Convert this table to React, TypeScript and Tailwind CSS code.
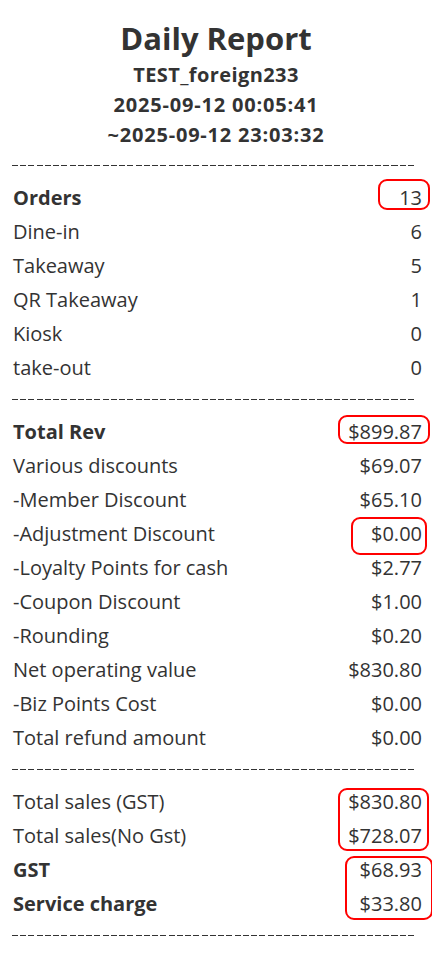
import React from "react";

type Row = { label: string; value: string; bold?: boolean };

const orders: Row[] = [
  { label: "Orders", value: "13", bold: true },
  { label: "Dine-in", value: "6" },
  { label: "Takeaway", value: "5" },
  { label: "QR Takeaway", value: "1" },
  { label: "Kiosk", value: "0" },
  { label: "take-out", value: "0" },
];

const revenue: Row[] = [
  { label: "Total Rev", value: "$899.87", bold: true },
  { label: "Various discounts", value: "$69.07" },
  { label: "-Member Discount", value: "$65.10" },
  { label: "-Adjustment Discount", value: "$0.00" },
  { label: "-Loyalty Points for cash", value: "$2.77" },
  { label: "-Coupon Discount", value: "$1.00" },
  { label: "-Rounding", value: "$0.20" },
  { label: "Net operating value", value: "$830.80" },
  { label: "-Biz Points Cost", value: "$0.00" },
  { label: "Total refund amount", value: "$0.00" },
];

const sales: Row[] = [
  { label: "Total sales (GST)", value: "$830.80" },
  { label: "Total sales(No Gst)", value: "$728.07" },
  { label: "GST", value: "$68.93", bold: true },
  { label: "Service charge", value: "$33.80", bold: true },
];

function Dash() {
  return (
    <div className="mb-[15px] ml-[12px] mt-[14px] h-px w-[404px] bg-[repeating-linear-gradient(to_right,#333_0px,#333_6px,transparent_6px,transparent_8.25px)]" />
  );
}

function Rows({ rows }: { rows: Row[] }) {
  return (
    <div className="flex flex-col">
      {rows.map((r) => (
        <div key={r.label} className="flex h-[34px] items-center justify-between">
          <span className={r.bold ? "font-bold" : ""}>{r.label}</span>
          <span>{r.value}</span>
        </div>
      ))}
    </div>
  );
}

export default function App() {
  return (
    <div className="relative min-h-[953px] w-[432px] bg-white text-[#333] [font-family:'Open_Sans','Noto_Sans',sans-serif]">
      <div className="flex flex-col items-center pt-[16px] font-bold">
        <div className="text-[31px] leading-[44px]">Daily Report</div>
        <div className="text-[20px] leading-[30px] tracking-[0.4px]">TEST_foreign233</div>
        <div className="text-[20px] leading-[30px] tracking-[0.8px]">2025-09-12 00:05:41</div>
        <div className="text-[20px] leading-[30px] tracking-[0.8px]">~2025-09-12 23:03:32</div>
      </div>
      <div className="pt-px">
        <Dash />
      </div>
      <div className="pl-[13px] pr-[10px] text-[20px]">
        <Rows rows={orders} />
      </div>
      <Dash />
      <div className="pl-[13px] pr-[10px] text-[20px]">
        <Rows rows={revenue} />
      </div>
      <Dash />
      <div className="pl-[13px] pr-[10px] text-[20px]">
        <Rows rows={sales} />
      </div>
      <Dash />

      {/* annotation boxes */}
      <div className="pointer-events-none absolute left-[378px] top-[179px] h-[31px] w-[52px] rounded-[9px] border-2 border-[#f00]" />
      <div className="pointer-events-none absolute left-[338px] top-[415px] h-[29px] w-[92px] rounded-[9px] border-2 border-[#f00]" />
      <div className="pointer-events-none absolute left-[351px] top-[517px] h-[38px] w-[76px] rounded-[9px] border-2 border-[#f00]" />
      <div className="pointer-events-none absolute left-[338px] top-[788px] h-[63px] w-[91px] rounded-[9px] border-2 border-[#f00]" />
      <div className="pointer-events-none absolute left-[345px] top-[856px] h-[64px] w-[88px] rounded-[9px] border-2 border-[#f00]" />
    </div>
  );
}
